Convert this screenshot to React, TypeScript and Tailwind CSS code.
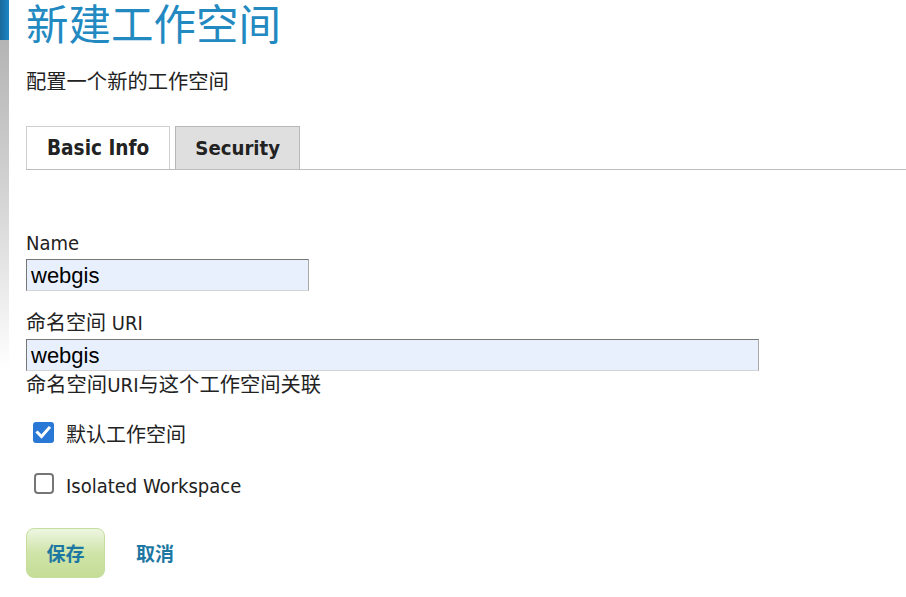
export default function App() {
  return (
    <div className="flex min-h-[597px] w-full bg-white text-[#222] font-[family-name:'DejaVu_Sans_Condensed','DejaVu_Sans','Noto_Sans_CJK_SC',sans-serif]">
      <aside className="flex w-[9px] shrink-0 flex-col">
        <div className="h-[40px] bg-gradient-to-r from-[#1b6a9c] to-[#1c86c4]" />
        <div className="h-[330px] bg-gradient-to-b from-[#b4b4b4] via-[#d6d6d6] to-white" />
      </aside>
      <main className="flex flex-1 flex-col pl-[17px]">
        <h1 className="mt-px text-[42.5px] font-normal leading-[42px] text-[#2389c1] font-[family-name:'Noto_Sans_CJK_SC',sans-serif]">
          新建工作空间
        </h1>
        <p className="mt-[29px] text-[20.3px] leading-[20px]">配置一个新的工作空间</p>

        <div className="mt-[34px] flex gap-[5px] border-b border-[#bdbdbd]">
          <div className="flex h-[43px] items-center border border-b-0 border-[#cfcfcf] bg-white px-[20px] text-[20.6px] font-bold">
            Basic Info
          </div>
          <div className="flex h-[43px] items-center border border-b-0 border-[#b8b8b8] bg-[#e0dfe0] px-[19px] text-[20.2px] font-bold">
            Security
          </div>
        </div>

        <label className="mt-[63px] text-[20px] leading-[20px]">Name</label>
        <div className="mt-[6px] flex h-[32px] w-[283px] items-center border border-t-[#767676] border-l-[#767676] border-r-[#a8a8a8] border-b-[#d4d4d4] bg-[#e8f0fe] pl-[4px] text-[22px] text-black font-[family-name:'Liberation_Sans',sans-serif]">
          webgis
        </div>

        <label className="mt-[22px] text-[20px] leading-[20px]">命名空间 URI</label>
        <div className="mt-[6px] flex h-[32px] w-[733px] items-center border border-t-[#767676] border-l-[#767676] border-r-[#a8a8a8] border-b-[#d4d4d4] bg-[#e8f0fe] pl-[4px] text-[22px] text-black font-[family-name:'Liberation_Sans',sans-serif]">
          webgis
        </div>
        <p className="mt-[4px] text-[20.3px] leading-[20px]">命名空间URI与这个工作空间关联</p>

        <div className="mt-[27px] flex items-start">
          <div className="ml-[7px] flex h-[21px] w-[21px] items-center justify-center rounded-[3px] bg-[#2a78d6]">
            <svg width="21" height="21" viewBox="0 0 21 21">
              <polyline points="4.5,10.5 8.5,14.5 16,6" fill="none" stroke="white" strokeWidth="3" strokeLinecap="square" />
            </svg>
          </div>
          <span className="ml-[12px] mt-[3px] text-[20px] leading-[20px]">默认工作空间</span>
        </div>

        <div className="mt-[28px] flex items-start">
          <div className="ml-[8px] h-[21px] w-[20px] rounded-[4px] border-2 border-[#767676] bg-white" />
          <span className="ml-[12px] mt-[3px] text-[20px] leading-[20px]">Isolated Workspace</span>
        </div>

        <div className="mt-[32px] flex items-center">
          <button className="flex h-[50px] w-[79px] items-center justify-center rounded-[8px] border border-[#c6df9e] bg-gradient-to-b from-[#eef6e2] via-[#cfe4a8] to-[#c4dd96] text-[19px] font-bold text-[#1d77a3] font-[family-name:'Noto_Sans_CJK_SC',sans-serif]">
            保存
          </button>
          <span className="ml-[31px] text-[19px] font-bold text-[#1d77a3] font-[family-name:'Noto_Sans_CJK_SC',sans-serif]">
            取消
          </span>
        </div>
      </main>
    </div>
  );
}
